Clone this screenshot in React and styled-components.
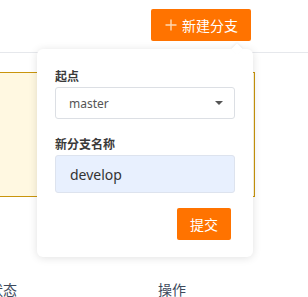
import styled, { createGlobalStyle } from "styled-components";

const GlobalStyle = createGlobalStyle`
    html, body {
        margin: 0;
        padding: 0;
        background: #ffffff;
    }
    body {
        font-family: "Noto Sans", "Noto Sans CJK SC", sans-serif;
        width: 308px;
        height: 297px;
        overflow: hidden;
    }
`

function App(){
    return(
        <>
            <GlobalStyle />
            <Page>
                <Toolbar>
                    <PrimaryButton>
                        <PlusIcon viewBox="0 0 12 12">
                            <path d="M6 0.5V11.5M0.5 6H11.5" stroke="currentColor" strokeWidth="1.4" fill="none" />
                        </PlusIcon>
                        新建分支
                    </PrimaryButton>
                </Toolbar>
                <Content>
                    <NoticeCard />
                    <TableHead>
                        <HeadCell width={169}>状态</HeadCell>
                        <HeadCell>操作</HeadCell>
                    </TableHead>
                </Content>

                <Popover>
                    <Arrow />
                    <Field>
                        <Label>起点</Label>
                        <Select>
                            <span>master</span>
                            <Caret />
                        </Select>
                    </Field>
                    <Field>
                        <Label>新分支名称</Label>
                        <TextInput defaultValue="develop" />
                    </Field>
                    <Footer>
                        <SubmitButton>提交</SubmitButton>
                    </Footer>
                </Popover>
            </Page>
        </>
    )
}

const Page = styled.div`
    position: relative;
    width: 308px;
    height: 297px;
    overflow: hidden;
`
const Toolbar = styled.div`
    display: flex;
    justify-content: flex-end;
    height: 53px;
    padding: 9px 57px 0 0;
    box-sizing: border-box;
    border-bottom: 1px solid #e6e8ec;
`
const PrimaryButton = styled.button`
    display: flex;
    align-items: center;
    gap: 5px;
    height: 32px;
    width: 100px;
    padding: 0 0 0 14px;
    box-sizing: border-box;
    border: none;
    border-radius: 2px;
    background: #ff7300;
    color: #ffffff;
    font-family: "Noto Sans CJK SC", sans-serif;
    font-size: 14px;
    cursor: pointer;
`
const PlusIcon = styled.svg`
    width: 12px;
    height: 12px;
    color: #ffd9b3;
`
const Content = styled.div`
    padding-top: 19px;
`
const NoticeCard = styled.div`
    height: 125px;
    width: 265px;
    margin-left: -10px;
    box-sizing: border-box;
    background: #fff8e1;
    border: 1px solid #c9950c;
`
const TableHead = styled.div`
    display: flex;
    margin: 82px 0 0 -11px;
`
const HeadCell = styled.div`
    width: ${props => props.width ? props.width + "px" : "auto"};
    flex-shrink: 0;
    font-family: "Noto Sans CJK SC", sans-serif;
    font-size: 14px;
    line-height: 20px;
    color: #3d4a5c;
`
const Popover = styled.div`
    position: absolute;
    top: 49px;
    left: 37px;
    width: 216px;
    box-sizing: border-box;
    padding: 18px 18px 17px;
    background: #ffffff;
    border-radius: 6px;
    box-shadow: 0 1px 8px rgba(0, 0, 0, 0.12);
    display: flex;
    flex-direction: column;
    gap: 16px;
`
const Arrow = styled.div`
    position: absolute;
    top: -4px;
    right: 12px;
    width: 8px;
    height: 8px;
    background: #ffffff;
    transform: rotate(45deg);
    box-shadow: -1px -1px 2px rgba(0, 0, 0, 0.06);
`
const Field = styled.div`
    display: flex;
    flex-direction: column;
    gap: 2px;
`
const Label = styled.div`
    font-family: "Noto Sans CJK SC", sans-serif;
    font-size: 12px;
    font-weight: 700;
    line-height: 18px;
    color: #3a3a3a;
`
const Select = styled.div`
    display: flex;
    align-items: center;
    justify-content: space-between;
    height: 32px;
    padding: 0 11px 0 13px;
    box-sizing: border-box;
    border: 1px solid #dcdfe4;
    border-radius: 3px;
    font-size: 12px;
    color: #555555;
`
const Caret = styled.span`
    width: 0;
    height: 0;
    border-left: 4px solid transparent;
    border-right: 4px solid transparent;
    border-top: 4px solid #555555;
`
const TextInput = styled.input`
    height: 38px;
    padding: 0 14px;
    box-sizing: border-box;
    border: 1px solid #dde3ee;
    border-radius: 3px;
    background: #e8f0fe;
    font-family: "Noto Sans", sans-serif;
    font-size: 14px;
    color: #333333;
    outline: none;
`
const Footer = styled.div`
    display: flex;
    justify-content: flex-end;
    padding-right: 4px;
    margin-top: -1px;
`
const SubmitButton = styled.button`
    height: 32px;
    width: 54px;
    border: none;
    border-radius: 2px;
    background: #ff7300;
    color: #ffffff;
    font-family: "Noto Sans CJK SC", sans-serif;
    font-size: 14px;
    cursor: pointer;
`

export default App;
